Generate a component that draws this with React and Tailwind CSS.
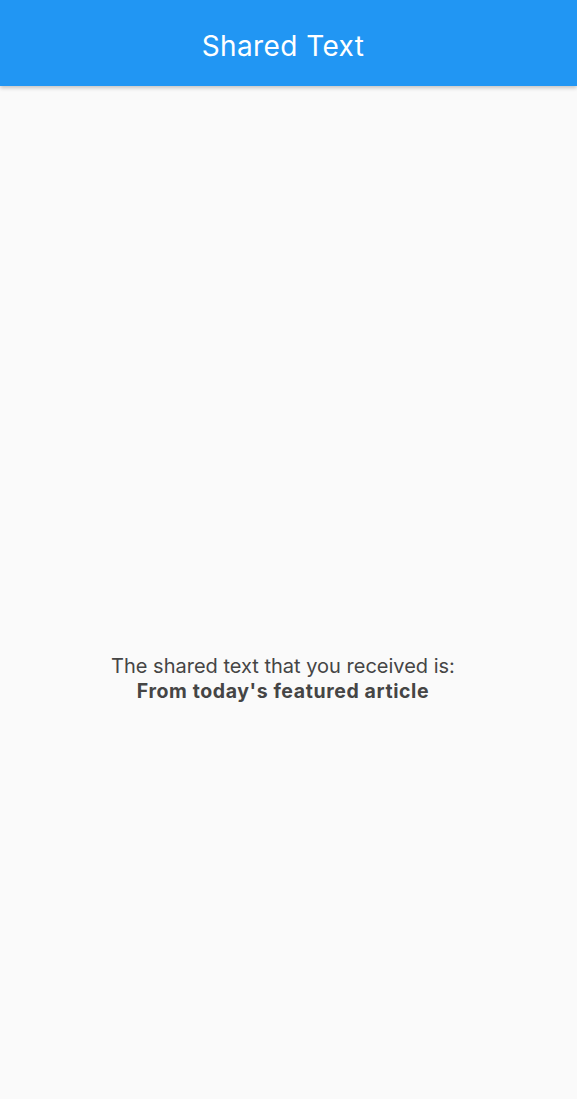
export default function App() {
  return (
    <div className="min-h-[1099px] bg-[#fafafa] flex flex-col font-['Inter','Noto_Sans',sans-serif]">
      {/* app bar */}
      <header className="h-[86px] bg-[#2196f3] flex items-center justify-center pr-[11px] shadow-[0_2px_4px_rgba(0,0,0,0.22)] relative z-10">
        <h1 className="text-white text-[28px] font-normal tracking-[0.4px] mt-[6px]">Shared Text</h1>
      </header>

      <main className="flex-1 flex flex-col items-center pr-[11px] pt-[568px]">
        <p className="text-[#454545] text-[20px] leading-[25px] text-center">
          The shared text that you received is:
          <br />
          <span className="font-bold tracking-[0.6px] text-[19.5px]">From today's featured article</span>
        </p>
      </main>
    </div>
  );
}
